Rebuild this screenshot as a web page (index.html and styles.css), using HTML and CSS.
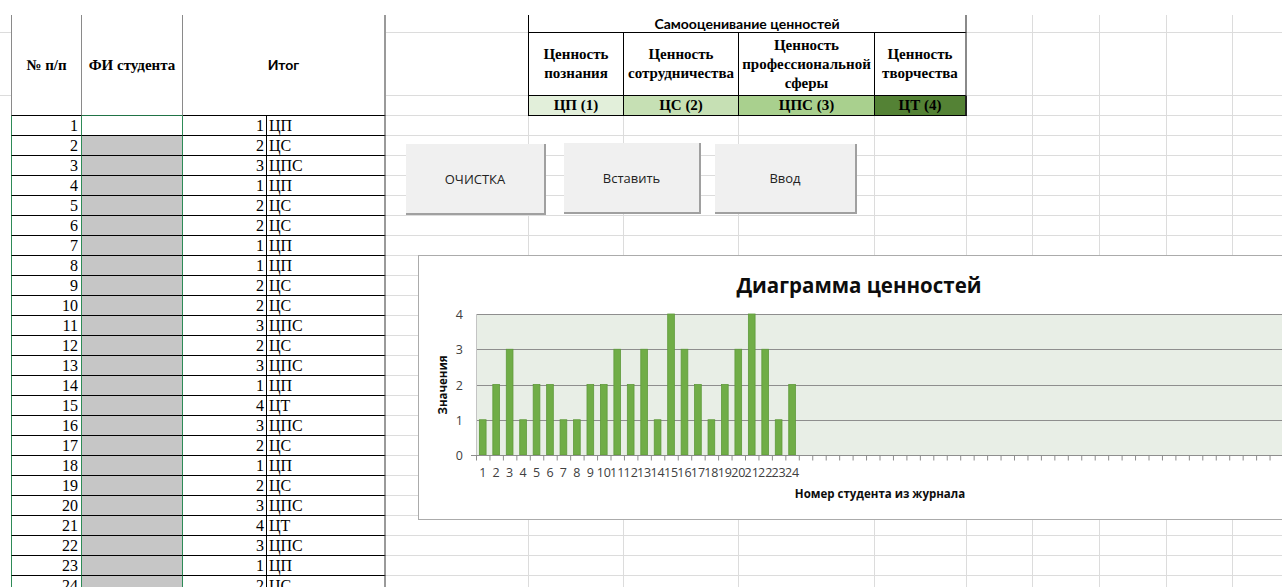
FILE: index.html
```html
<!DOCTYPE html>
<html lang="ru">
<head>
<meta charset="utf-8">
<title>Самооценивание ценностей</title>
<link rel="stylesheet" href="styles.css">
</head>
<body>
<div class="sheet">
  <div class="roster">
    <div class="hd hd-num">№ п/п</div>
    <div class="hd hd-name">ФИ студента</div>
    <div class="hd hd-total">Итог</div>

    <div class="num">1</div><div class="name active"></div><div class="score">1</div><div class="code">ЦП</div>
    <div class="num">2</div><div class="name"></div><div class="score">2</div><div class="code">ЦС</div>
    <div class="num">3</div><div class="name"></div><div class="score">3</div><div class="code">ЦПС</div>
    <div class="num">4</div><div class="name"></div><div class="score">1</div><div class="code">ЦП</div>
    <div class="num">5</div><div class="name"></div><div class="score">2</div><div class="code">ЦС</div>
    <div class="num">6</div><div class="name"></div><div class="score">2</div><div class="code">ЦС</div>
    <div class="num">7</div><div class="name"></div><div class="score">1</div><div class="code">ЦП</div>
    <div class="num">8</div><div class="name"></div><div class="score">1</div><div class="code">ЦП</div>
    <div class="num">9</div><div class="name"></div><div class="score">2</div><div class="code">ЦС</div>
    <div class="num">10</div><div class="name"></div><div class="score">2</div><div class="code">ЦС</div>
    <div class="num">11</div><div class="name"></div><div class="score">3</div><div class="code">ЦПС</div>
    <div class="num">12</div><div class="name"></div><div class="score">2</div><div class="code">ЦС</div>
    <div class="num">13</div><div class="name"></div><div class="score">3</div><div class="code">ЦПС</div>
    <div class="num">14</div><div class="name"></div><div class="score">1</div><div class="code">ЦП</div>
    <div class="num">15</div><div class="name"></div><div class="score">4</div><div class="code">ЦТ</div>
    <div class="num">16</div><div class="name"></div><div class="score">3</div><div class="code">ЦПС</div>
    <div class="num">17</div><div class="name"></div><div class="score">2</div><div class="code">ЦС</div>
    <div class="num">18</div><div class="name"></div><div class="score">1</div><div class="code">ЦП</div>
    <div class="num">19</div><div class="name"></div><div class="score">2</div><div class="code">ЦС</div>
    <div class="num">20</div><div class="name"></div><div class="score">3</div><div class="code">ЦПС</div>
    <div class="num">21</div><div class="name"></div><div class="score">4</div><div class="code">ЦТ</div>
    <div class="num">22</div><div class="name"></div><div class="score">3</div><div class="code">ЦПС</div>
    <div class="num">23</div><div class="name"></div><div class="score">1</div><div class="code">ЦП</div>
    <div class="num">24</div><div class="name"></div><div class="score">2</div><div class="code">ЦС</div>
  </div>

  <div class="values">
    <div class="values-title">Самооценивание ценностей</div>
    <div class="vh vh-first">Ценность<br>познания</div>
    <div class="vh">Ценность<br>сотрудничества</div>
    <div class="vh">Ценность<br>профессиональной<br>сферы</div>
    <div class="vh vh-last">Ценность<br>творчества</div>
    <div class="vk vk-first lvl1">ЦП (1)</div>
    <div class="vk lvl2">ЦС (2)</div>
    <div class="vk lvl3">ЦПС (3)</div>
    <div class="vk vk-last lvl4">ЦТ (4)</div>
  </div>

  <div class="controls">
    <button class="btn btn-clear">ОЧИСТКА</button>
    <button class="btn btn-paste">Вставить</button>
    <button class="btn btn-enter">Ввод</button>
  </div>

  <div class="chart">
    <svg width="882" height="265" viewBox="0 0 882 265">
      <rect class="chart-frame" x="0.5" y="0.5" width="881" height="264"/>
      <text class="chart-title" x="441" y="38">Диаграмма ценностей</text>

      <rect class="plot" x="58" y="59" width="808" height="141"/>
      <line class="grid" x1="58" y1="59.5" x2="866" y2="59.5"/>
      <line class="grid" x1="58" y1="94.5" x2="866" y2="94.5"/>
      <line class="grid" x1="58" y1="130.5" x2="866" y2="130.5"/>
      <line class="grid" x1="58" y1="165.5" x2="866" y2="165.5"/>
      <line class="y-axis" x1="58.5" y1="59" x2="58.5" y2="200"/>

      <g class="bars">
        <rect x="61.38" y="164.75" width="6.7" height="35.25"/>
        <rect x="74.83" y="129.5" width="6.7" height="70.5"/>
        <rect x="88.28" y="94.25" width="6.7" height="105.75"/>
        <rect x="101.73" y="164.75" width="6.7" height="35.25"/>
        <rect x="115.18" y="129.5" width="6.7" height="70.5"/>
        <rect x="128.63" y="129.5" width="6.7" height="70.5"/>
        <rect x="142.08" y="164.75" width="6.7" height="35.25"/>
        <rect x="155.53" y="164.75" width="6.7" height="35.25"/>
        <rect x="168.98" y="129.5" width="6.7" height="70.5"/>
        <rect x="182.43" y="129.5" width="6.7" height="70.5"/>
        <rect x="195.88" y="94.25" width="6.7" height="105.75"/>
        <rect x="209.33" y="129.5" width="6.7" height="70.5"/>
        <rect x="222.78" y="94.25" width="6.7" height="105.75"/>
        <rect x="236.23" y="164.75" width="6.7" height="35.25"/>
        <rect x="249.68" y="59" width="6.7" height="141"/>
        <rect x="263.13" y="94.25" width="6.7" height="105.75"/>
        <rect x="276.58" y="129.5" width="6.7" height="70.5"/>
        <rect x="290.03" y="164.75" width="6.7" height="35.25"/>
        <rect x="303.48" y="129.5" width="6.7" height="70.5"/>
        <rect x="316.93" y="94.25" width="6.7" height="105.75"/>
        <rect x="330.38" y="59" width="6.7" height="141"/>
        <rect x="343.83" y="94.25" width="6.7" height="105.75"/>
        <rect x="357.28" y="164.75" width="6.7" height="35.25"/>
        <rect x="370.73" y="129.5" width="6.7" height="70.5"/>
      </g>

      <line class="x-axis" x1="53" y1="200.5" x2="866" y2="200.5"/>
      <line class="x-ticks" x1="58" y1="203" x2="866" y2="203"/>

      <g class="y-labels">
        <text x="45" y="64">4</text>
        <text x="45" y="99">3</text>
        <text x="45" y="135">2</text>
        <text x="45" y="170">1</text>
        <text x="45" y="205">0</text>
      </g>

      <g class="x-labels">
        <text x="64.73" y="222">1</text>
        <text x="78.18" y="222">2</text>
        <text x="91.63" y="222">3</text>
        <text x="105.08" y="222">4</text>
        <text x="118.53" y="222">5</text>
        <text x="131.98" y="222">6</text>
        <text x="145.43" y="222">7</text>
        <text x="158.88" y="222">8</text>
        <text x="172.33" y="222">9</text>
        <text x="185.78" y="222">10</text>
        <text x="199.23" y="222">11</text>
        <text x="212.68" y="222">12</text>
        <text x="226.13" y="222">13</text>
        <text x="239.58" y="222">14</text>
        <text x="253.03" y="222">15</text>
        <text x="266.48" y="222">16</text>
        <text x="279.93" y="222">17</text>
        <text x="293.38" y="222">18</text>
        <text x="306.83" y="222">19</text>
        <text x="320.28" y="222">20</text>
        <text x="333.73" y="222">21</text>
        <text x="347.18" y="222">22</text>
        <text x="360.63" y="222">23</text>
        <text x="374.08" y="222">24</text>
      </g>

      <text class="axis-title" transform="translate(29 130) rotate(-90)">Значения</text>
      <text class="axis-title" x="462" y="243">Номер студента из журнала</text>
    </svg>
  </div>
</div>
</body>
</html>
```

FILE: styles.css
```css
html,
body {
  margin: 0;
  height: 100%;
  overflow: hidden;
  background: #fff;
}

body {
  font-family: "Liberation Serif", "Times New Roman", serif;
  color: #000;
}

/* worksheet with light cell gridlines */
.sheet {
  position: relative;
  margin-top: 15px;
  height: 572px;
  display: flex;
  align-items: flex-start;
  background:
    linear-gradient(#dcdcdc, #dcdcdc) 0 17px / 100% 1px no-repeat,
    linear-gradient(#dcdcdc, #dcdcdc) 0 80px / 100% 1px no-repeat,
    repeating-linear-gradient(to bottom, #dcdcdc 0 1px, transparent 1px 20px) 386px 100px / calc(100% - 386px) calc(100% - 100px) no-repeat,
    linear-gradient(#dcdcdc, #dcdcdc) 528px 0 / 1px 100% no-repeat,
    linear-gradient(#dcdcdc, #dcdcdc) 623px 0 / 1px 100% no-repeat,
    linear-gradient(#dcdcdc, #dcdcdc) 738px 0 / 1px 100% no-repeat,
    linear-gradient(#dcdcdc, #dcdcdc) 874px 0 / 1px 100% no-repeat,
    linear-gradient(#dcdcdc, #dcdcdc) 966px 0 / 1px 100% no-repeat,
    linear-gradient(#dcdcdc, #dcdcdc) 1032px 0 / 1px 100% no-repeat,
    linear-gradient(#dcdcdc, #dcdcdc) 1099px 0 / 1px 100% no-repeat,
    linear-gradient(#dcdcdc, #dcdcdc) 1166px 0 / 1px 100% no-repeat,
    linear-gradient(#dcdcdc, #dcdcdc) 1232px 0 / 1px 100% no-repeat,
    linear-gradient(#dcdcdc, #dcdcdc) 1299px 0 / 1px 100% no-repeat,
    #fff;
}

/* student roster */
.roster {
  margin-left: 11px;
  display: grid;
  grid-template-columns: 71px 101px 84px 119px;
  grid-template-rows: 101px;
  grid-auto-rows: 20px;
  background: #fff;
}

.roster > div {
  box-sizing: border-box;
  border-bottom: 1px solid #000;
  font-size: 16px;
  line-height: 20px;
  white-space: nowrap;
}

.roster > .hd {
  display: flex;
  align-items: center;
  justify-content: center;
  border-right: 1px solid #8a8a8a;
  font-size: 15px;
  font-weight: bold;
  line-height: 18px;
}

.roster > .hd-num {
  border-left: 1px solid #8a8a8a;
}

.roster > .hd-name {
  border-bottom-color: #217346;
}

.roster > .hd-total {
  grid-column: span 2;
  border-right: 2px solid #9a9a9a;
  font-family: Lato, "Liberation Sans", sans-serif;
  font-size: 14px;
}

.roster > .num {
  border-left: 1px solid #2e8b57;
  border-right: 1px solid #2e8b57;
  text-align: right;
  padding-right: 3px;
}

.roster > .name {
  background: #c6c6c6;
  border-right: 1px solid #2e8b57;
}

.roster > .name.active {
  background: #fff;
}

.roster > .score {
  border-right: 1px solid #000;
  text-align: right;
  padding-right: 2px;
}

.roster > .code {
  border-right: 2px solid #9a9a9a;
  padding-left: 2px;
}

/* value self-assessment header */
.values {
  margin-left: 142px;
  display: grid;
  grid-template-columns: 96px 115px 136px 92px;
  grid-template-rows: 18px 63px 20px;
  background: #fff;
}

.values > div {
  box-sizing: border-box;
  display: flex;
  align-items: center;
  justify-content: center;
  text-align: center;
  border-bottom: 1px solid #000;
  border-right: 1px solid #000;
}

.values > .values-title {
  grid-column: 1 / -1;
  border-left: 1px solid #000;
  border-right: 2px solid #8a8a8a;
  font-family: Lato, "Liberation Sans", sans-serif;
  font-weight: bold;
  font-size: 14px;
  line-height: 17px;
}

.values > .vh {
  font-weight: bold;
  font-size: 15px;
  line-height: 19px;
}

.values > .vh-first,
.values > .vk-first {
  border-left: 1px solid #000;
}

.values > .vh-last {
  border-right: 2px solid #8a8a8a;
}

.values > .vk {
  font-weight: bold;
  font-size: 15px;
  line-height: 19px;
}

.values > .vk-last {
  border-right: 2px solid #222;
}

.lvl1 { background: #e2efda; }
.lvl2 { background: #c6e0b4; }
.lvl3 { background: #a9d08e; }
.lvl4 { background: #548235; }

/* form buttons floating over the sheet */
.controls {
  position: absolute;
  left: 406px;
  top: 129px;
  display: flex;
  align-items: flex-start;
}

.btn {
  box-sizing: border-box;
  height: 71px;
  margin: 0;
  padding: 0;
  border: none;
  border-right: 2px solid #a0a0a0;
  border-bottom: 2px solid #a0a0a0;
  background: #f0f0f0;
  font-family: "Open Sans", "Noto Sans", sans-serif;
  font-size: 13px;
  color: #222;
}

.btn-clear { width: 140px; }
.btn-paste { width: 137px; margin-left: 18px; margin-top: -1px; }
.btn-enter { width: 142px; margin-left: 14px; height: 70px; }

/* values chart */
.chart {
  position: absolute;
  left: 418px;
  top: 240px;
}

.chart svg {
  display: block;
}

.chart-frame {
  fill: #fff;
  stroke: #ababab;
}

.chart text {
  font-family: "Open Sans", "Noto Sans", sans-serif;
}

.chart-title {
  font-size: 20.5px;
  font-weight: bold;
  fill: #0d0d0d;
  text-anchor: middle;
}

.plot {
  fill: #e8eee6;
}

.grid {
  stroke: #8e8e8e;
  stroke-width: 1;
}

.y-axis {
  stroke: #c4c4c4;
}

.x-axis {
  stroke: #8e8e8e;
}

.x-ticks {
  stroke: #8e8e8e;
  stroke-width: 5;
  stroke-dasharray: 1 12.45;
}

.bars rect {
  fill: #70ad47;
  stroke: #5f9a3b;
  stroke-width: 0.8;
}

.y-labels text,
.x-labels text {
  font-size: 12.5px;
  fill: #404040;
}

.y-labels text {
  text-anchor: end;
}

.x-labels text {
  text-anchor: middle;
}

.axis-title {
  font-size: 11.5px;
  font-weight: bold;
  fill: #0d0d0d;
  text-anchor: middle;
}
```
